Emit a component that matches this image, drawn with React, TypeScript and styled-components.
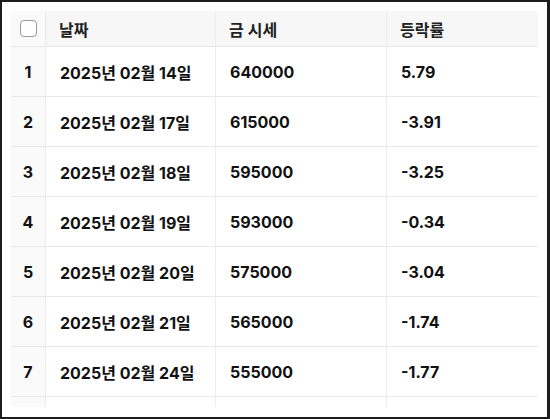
import React from 'react';
import { styled, createGlobalStyle } from 'styled-components';

const rows = [
  ['2025년 02월 14일', '640000', '5.79'],
  ['2025년 02월 17일', '615000', '-3.91'],
  ['2025년 02월 18일', '595000', '-3.25'],
  ['2025년 02월 19일', '593000', '-0.34'],
  ['2025년 02월 20일', '575000', '-3.04'],
  ['2025년 02월 21일', '565000', '-1.74'],
  ['2025년 02월 24일', '555000', '-1.77'],
];

function App() {
  return (
    <>
      <GlobalStyle />
      <Frame>
        <Scroller>
          <Table>
            <HeaderRow>
              <IndexCell>
                <Checkbox />
              </IndexCell>
              <HeadCell>날짜</HeadCell>
              <HeadCell>금 시세</HeadCell>
              <HeadCell>등락률</HeadCell>
            </HeaderRow>
            {rows.map((item, index) => (
              <Row key={index}>
                <IndexCell>{index + 1}</IndexCell>
                <Cell>{item[0]}</Cell>
                <Cell>{item[1]}</Cell>
                <Cell>{item[2]}</Cell>
              </Row>
            ))}
            <Row>
              <IndexCell />
              <Cell />
              <Cell />
              <Cell />
            </Row>
          </Table>
        </Scroller>
      </Frame>
    </>
  );
}

const GlobalStyle = createGlobalStyle`
  body {
    margin: 0;
    background: #fff;
    font-family: Inter, 'Noto Sans CJK KR', sans-serif;
  }
`;

const Frame = styled.div`
  box-sizing: border-box;
  width: 550px;
  height: 419px;
  border: 2px solid #1c1c1c;
  border-right-width: 3px;
  padding: 9px;
  background: #fff;
`;

const Scroller = styled.div`
  width: 527px;
  height: 396px;
  overflow: hidden;
`;

const Table = styled.div`
  display: flex;
  flex-direction: column;
`;

const Row = styled.div`
  display: grid;
  grid-template-columns: 35px 170px 171px 151px;
  height: 50px;
  border-bottom: 1px solid #e9e9e9;
  box-sizing: border-box;
  color: #111;
  font-size: 16px;
  font-weight: 700;
`;

const HeaderRow = styled(Row)`
  height: 36px;
  background: #f7f7f7;
  color: #222;
  font-size: 16px;
  font-weight: 600;
`;

const Cell = styled.div`
  display: flex;
  align-items: center;
  padding-left: 14px;
  border-right: 1px solid #ececec;
  &:last-child {
    border-right: none;
  }
`;

const HeadCell = styled(Cell)`
  padding-left: 13px;
`;

const IndexCell = styled.div`
  display: flex;
  align-items: center;
  justify-content: center;
  background: #fafafa;
  border-right: 1px solid #ececec;
`;

const Checkbox = styled.div`
  width: 17px;
  height: 17px;
  box-sizing: border-box;
  border: 1.5px solid #9a9a9a;
  border-radius: 4px;
  background: #fff;
`;

export default App;
